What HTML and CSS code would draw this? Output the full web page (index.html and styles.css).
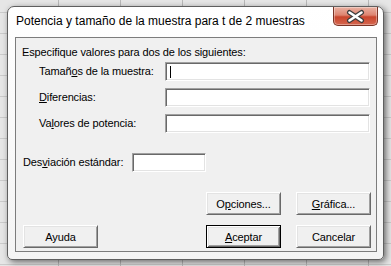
FILE: index.html
```html
<!DOCTYPE html>
<html lang="es">
<head>
  <meta charset="UTF-8">
  <meta name="viewport" content="width=device-width, initial-scale=1">
  <title>Potencia y tamaño de la muestra</title>
  <link rel="stylesheet" href="styles.css">
</head>
<body>

<div class="window">
  <div class="titlebar">
    <span class="title">Potencia y tamaño de la muestra para t de 2 muestras</span>
    <span class="close">
      <svg width="43" height="17" viewBox="0 0 43 17">
        <path d="M15.5 4.5 L27.5 12.5 M27.5 4.5 L15.5 12.5" stroke="#3c3c3c" stroke-width="5" stroke-linecap="round"/>
        <path d="M15.5 4.5 L27.5 12.5 M27.5 4.5 L15.5 12.5" stroke="#fff" stroke-width="2.6" stroke-linecap="round"/>
      </svg>
    </span>
  </div>

  <div class="client">
    <div class="intro">Especifique valores para dos de los siguientes:</div>

    <div class="fields">
      <div class="field">
        <label>Tamañ<u>o</u>s de la muestra:</label>
        <div class="input"><span class="caret"></span></div>
      </div>
      <div class="field">
        <label><u>D</u>iferencias:</label>
        <div class="input"></div>
      </div>
      <div class="field">
        <label>Va<u>l</u>ores de potencia:</label>
        <div class="input"></div>
      </div>
    </div>

    <div class="field std">
      <label>Des<u>v</u>iación estándar:</label>
      <div class="input small"></div>
    </div>

    <div class="buttons first">
      <button>O<u>p</u>ciones...</button>
      <button><u>G</u>ráfica...</button>
    </div>
    <div class="buttons last">
      <button class="help">Ayuda</button>
      <span class="spacer"></span>
      <button class="default"><u>A</u>ceptar</button>
      <button>Cancelar</button>
    </div>
  </div>
</div>

</body>
</html>
```

FILE: styles.css
```css
body {
  margin: 0;
  height: 266px;
  overflow: hidden;
  font-family: "Liberation Sans", Arial, sans-serif;
  background-color: #e6e6e6;
  background-image:
    linear-gradient(90deg, #b9b9b9 1px, transparent 1px),
    linear-gradient(#cbcbcb 1px, transparent 1px);
  background-size: 62px 100%, 100% 21px;
  background-position: 58px 0, 0 12px;
}
.window {
  box-sizing: border-box;
  width: 377px;
  height: 254px;
  margin: 6px 0 0 7px;
  border: 1px solid #5f5f5f;
  border-radius: 7px 7px 5px 5px;
  background: linear-gradient(#ffffff, #f4f4f4);
  box-shadow: 2px 2px 6px rgba(0,0,0,0.55);
}
.titlebar {
  display: flex;
  justify-content: space-between;
  height: 30px;
  padding: 0 5px 0 8px;
}
.title {
  padding-top: 6px;
  font-size: 12px;
  line-height: 16px;
  color: #000;
}
.close {
  display: flex;
  align-items: center;
  justify-content: center;
  box-sizing: border-box;
  width: 45px;
  height: 19px;
  border: 1px solid #7b3325;
  border-top: none;
  border-radius: 0 0 5px 5px;
  background: linear-gradient(#eab2a3, #de8470 45%, #c9452c 55%, #d5674f);
  box-shadow: inset 0 0 0 1px rgba(255,255,255,0.35);
}
.client {
  box-sizing: border-box;
  height: 215px;
  margin: 0 6px 0 7px;
  border: 1px solid #7c7c7c;
  background: #f0f0f0;
  font-size: 11px;
  line-height: 13px;
  letter-spacing: -0.12px;
  color: #000;
}
.intro {
  margin: 8px 0 0 6px;
}
.fields {
  display: flex;
  flex-direction: column;
  gap: 7px;
  margin-top: 3px;
}
.field {
  display: flex;
  align-items: center;
  height: 19px;
}
.field label {
  width: 126px;
  padding-left: 23px;
}
.input {
  display: flex;
  align-items: center;
  box-sizing: border-box;
  width: 205px;
  height: 19px;
  padding-left: 4px;
  background: #fff;
  border: 1px solid;
  border-color: #a0a0a0 #ffffff #ffffff #a0a0a0;
  box-shadow: inset 1px 1px 0 #696969, inset -1px -1px 0 #e3e3e3;
}
.caret {
  width: 1px;
  height: 12px;
  background: #000;
}
.std {
  margin-top: 20px;
}
.std label {
  width: 109px;
  padding-left: 7px;
}
.input.small {
  width: 74px;
}
.buttons {
  display: flex;
  justify-content: flex-end;
  gap: 15px;
  padding: 0 5px 0 7px;
}
.buttons.first {
  margin-top: 20px;
}
.buttons.last {
  margin-top: 10px;
}
.spacer {
  flex: 1;
  margin-left: -15px;
}
button {
  box-sizing: border-box;
  width: 75px;
  height: 23px;
  padding: 0;
  font-family: "Liberation Sans", Arial, sans-serif;
  font-size: 11px;
  letter-spacing: -0.12px;
  color: #000;
  background: #f0f0f0;
  border: 1px solid;
  border-color: #ffffff #696969 #696969 #ffffff;
  box-shadow: inset 1px 1px 0 #e3e3e3, inset -1px -1px 0 #a0a0a0;
}
button.default {
  border-color: #000;
  box-shadow: inset 1px 1px 0 #fff, inset -1px -1px 0 #696969,
    inset 2px 2px 0 #e3e3e3, inset -2px -2px 0 #a0a0a0;
}
```
